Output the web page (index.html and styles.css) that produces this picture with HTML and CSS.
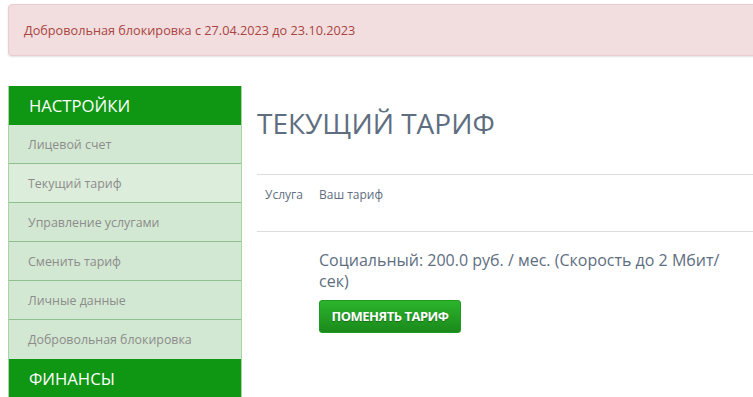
FILE: index.html
```html
<!DOCTYPE html>
<html lang="ru">

<head>
  <meta charset="UTF-8">
  <meta name="viewport" content="width=device-width, initial-scale=1.0">
  <title>Текущий тариф</title>

  <link rel="stylesheet" href="styles.css">
</head>

<body>
  <div class="page">
    <div class="alert">Добровольная блокировка с 27.04.2023 до 23.10.2023</div>

    <div class="layout">
      <div class="sidebar">
        <div class="side-title">Настройки</div>
        <a class="side-link" href="#">Лицевой счет</a>
        <a class="side-link active" href="#">Текущий тариф</a>
        <a class="side-link" href="#">Управление услугами</a>
        <a class="side-link" href="#">Сменить тариф</a>
        <a class="side-link" href="#">Личные данные</a>
        <a class="side-link" href="#">Добровольная блокировка</a>
        <div class="side-title">Финансы</div>
      </div>

      <div class="content">
        <h1>Текущий тариф</h1>
        <table class="tariff">
          <thead>
            <tr>
              <th class="col-service">Услуга</th>
              <th>Ваш тариф</th>
            </tr>
          </thead>
          <tbody>
            <tr>
              <td></td>
              <td>
                <div class="tariff-name">Социальный: 200.0 руб. / мес. (Скорость до 2 Мбит/сек)</div>
                <a class="btn" href="#">Поменять тариф</a>
              </td>
            </tr>
          </tbody>
        </table>
      </div>
    </div>
  </div>
</body>

</html>
```

FILE: styles.css
```css
* {
  box-sizing: border-box;
}

html,
body {
  margin: 0;
  padding: 0;
  overflow: hidden;
}

body {
  background: #ffffff;
  font-family: "Open Sans", "Noto Sans", sans-serif;
  color: #5e6e80;
}

.page {
  padding: 4px 0 0 8px;
}

.alert {
  margin-right: -12px;
  height: 52px;
  padding: 0 15px;
  display: flex;
  align-items: center;
  background: #f2dede;
  border: 1px solid #ebccd1;
  border-radius: 4px;
  box-shadow: 0 1px 2px rgba(0, 0, 0, 0.12);
  color: #a94442;
  font-size: 12.7px;
}

.layout {
  display: flex;
  gap: 15px;
  margin-top: 30px;
}

.sidebar {
  width: 234px;
  flex-shrink: 0;
  display: flex;
  flex-direction: column;
  border-left: 1px solid #a8d5a6;
  border-right: 1px solid #a8d5a6;
}

.side-title {
  height: 39px;
  padding: 0 20px;
  display: flex;
  align-items: center;
  background: #0f9612;
  color: #ffffff;
  font-size: 16.7px;
  text-transform: uppercase;
}

.side-link {
  height: 39px;
  padding: 0 19px;
  display: flex;
  align-items: center;
  background: #d3e8d2;
  border-bottom: 1px solid #8fbf8d;
  color: #8c8c8c;
  font-size: 12.4px;
  text-decoration: none;
}

.side-link.active {
  background: #ddeddb;
}

.side-link:nth-last-child(2) {
  border-bottom: none;
}

.content {
  flex: 1;
}

h1 {
  margin: 19px 0 33px;
  font-size: 28px;
  font-weight: 400;
  line-height: 36px;
  color: #5e6e80;
  text-transform: uppercase;
}

.tariff {
  width: 100%;
  border-collapse: collapse;
}

.tariff th {
  height: 57px;
  padding: 11px 8px 8px;
  text-align: left;
  vertical-align: top;
  font-size: 12px;
  font-weight: 400;
  color: #5e6e80;
  border-top: 1px solid #dddddd;
  border-bottom: 1px solid #dddddd;
}

.tariff th.col-service {
  width: 54px;
}

.tariff td {
  padding: 18px 8px 8px;
  vertical-align: top;
}

.tariff-name {
  font-size: 16px;
  line-height: 21px;
  color: #5e6e80;
}

.btn {
  display: inline-block;
  margin-top: 8px;
  width: 142px;
  height: 33px;
  line-height: 31px;
  text-align: center;
  background: linear-gradient(#2cb42d, #1a8a1b);
  border: 1px solid #1f9a20;
  border-radius: 3px;
  color: #ffffff;
  font-size: 13px;
  font-weight: 700;
  letter-spacing: -0.5px;
  text-transform: uppercase;
  text-decoration: none;
  text-shadow: 0 1px 1px rgba(0, 0, 0, 0.3);
}
```
